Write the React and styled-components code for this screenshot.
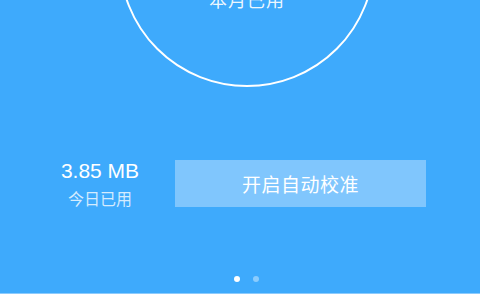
import React from 'react'
import styled, { createGlobalStyle } from 'styled-components'

const GlobalStyle = createGlobalStyle`
  html, body {
    margin: 0;
    padding: 0;
    background: #ffffff;
  }
  body {
    font-family: "Noto Sans CJK SC", "Liberation Sans", sans-serif;
  }
`

const Screen = styled.main`
  width: 480px;
  height: 300px;
  display: flex;
  flex-direction: column;
  overflow: hidden;
  background: #ffffff;
`

const Panel = styled.section`
  height: 293px;
  background: #3eaafc;
  border-bottom: 1px solid #8ccbfd;
  display: flex;
  flex-direction: column;
  align-items: center;
  overflow: hidden;
`

const Ring = styled.div`
  box-sizing: border-box;
  width: 256px;
  height: 256px;
  margin-top: -169px;
  margin-left: 14px;
  flex-shrink: 0;
  border: 2px solid #ffffff;
  border-radius: 50%;
  display: flex;
  flex-direction: column;
  align-items: center;
  justify-content: flex-end;
  padding-bottom: 75px;
  color: #ffffff;
`

const RingLabel = styled.span`
  font-size: 18px;
  line-height: 22px;
  letter-spacing: 1px;
  color: rgba(255, 255, 255, 0.92);
`

const StatsRow = styled.div`
  width: 100%;
  margin-top: 72px;
  display: flex;
  align-items: center;
`

const Stat = styled.div`
  width: 200px;
  display: flex;
  flex-direction: column;
  align-items: center;
`

const StatValue = styled.span`
  font-family: "Liberation Sans", "Noto Sans", sans-serif;
  font-size: 21px;
  line-height: 24px;
  color: #ffffff;
`

const StatLabel = styled.span`
  margin-top: 5px;
  font-size: 16px;
  line-height: 20px;
  color: rgba(255, 255, 255, 0.78);
`

const CalibrateButton = styled.button`
  width: 251px;
  height: 47px;
  margin-left: -25px;
  border: none;
  background: #80c6fd;
  color: #ffffff;
  font-family: "Noto Sans CJK SC", sans-serif;
  font-size: 19px;
  letter-spacing: 0.5px;
  cursor: pointer;
`

const Dots = styled.div`
  margin-top: 68px;
  margin-left: 12px;
  display: flex;
  gap: 13px;
`

const Dot = styled.span`
  width: 6px;
  height: 6px;
  border-radius: 50%;
  background: ${(p) => (p.$active ? '#ffffff' : 'rgba(255, 255, 255, 0.4)')};
`

const App = () => {
  return (
    <Screen>
      <GlobalStyle />
      <Panel>
        <Ring>
          <RingLabel>本月已用</RingLabel>
        </Ring>
        <StatsRow>
          <Stat>
            <StatValue>3.85 MB</StatValue>
            <StatLabel>今日已用</StatLabel>
          </Stat>
          <CalibrateButton>开启自动校准</CalibrateButton>
        </StatsRow>
        <Dots>
          <Dot $active />
          <Dot />
        </Dots>
      </Panel>
    </Screen>
  )
}

export default App
